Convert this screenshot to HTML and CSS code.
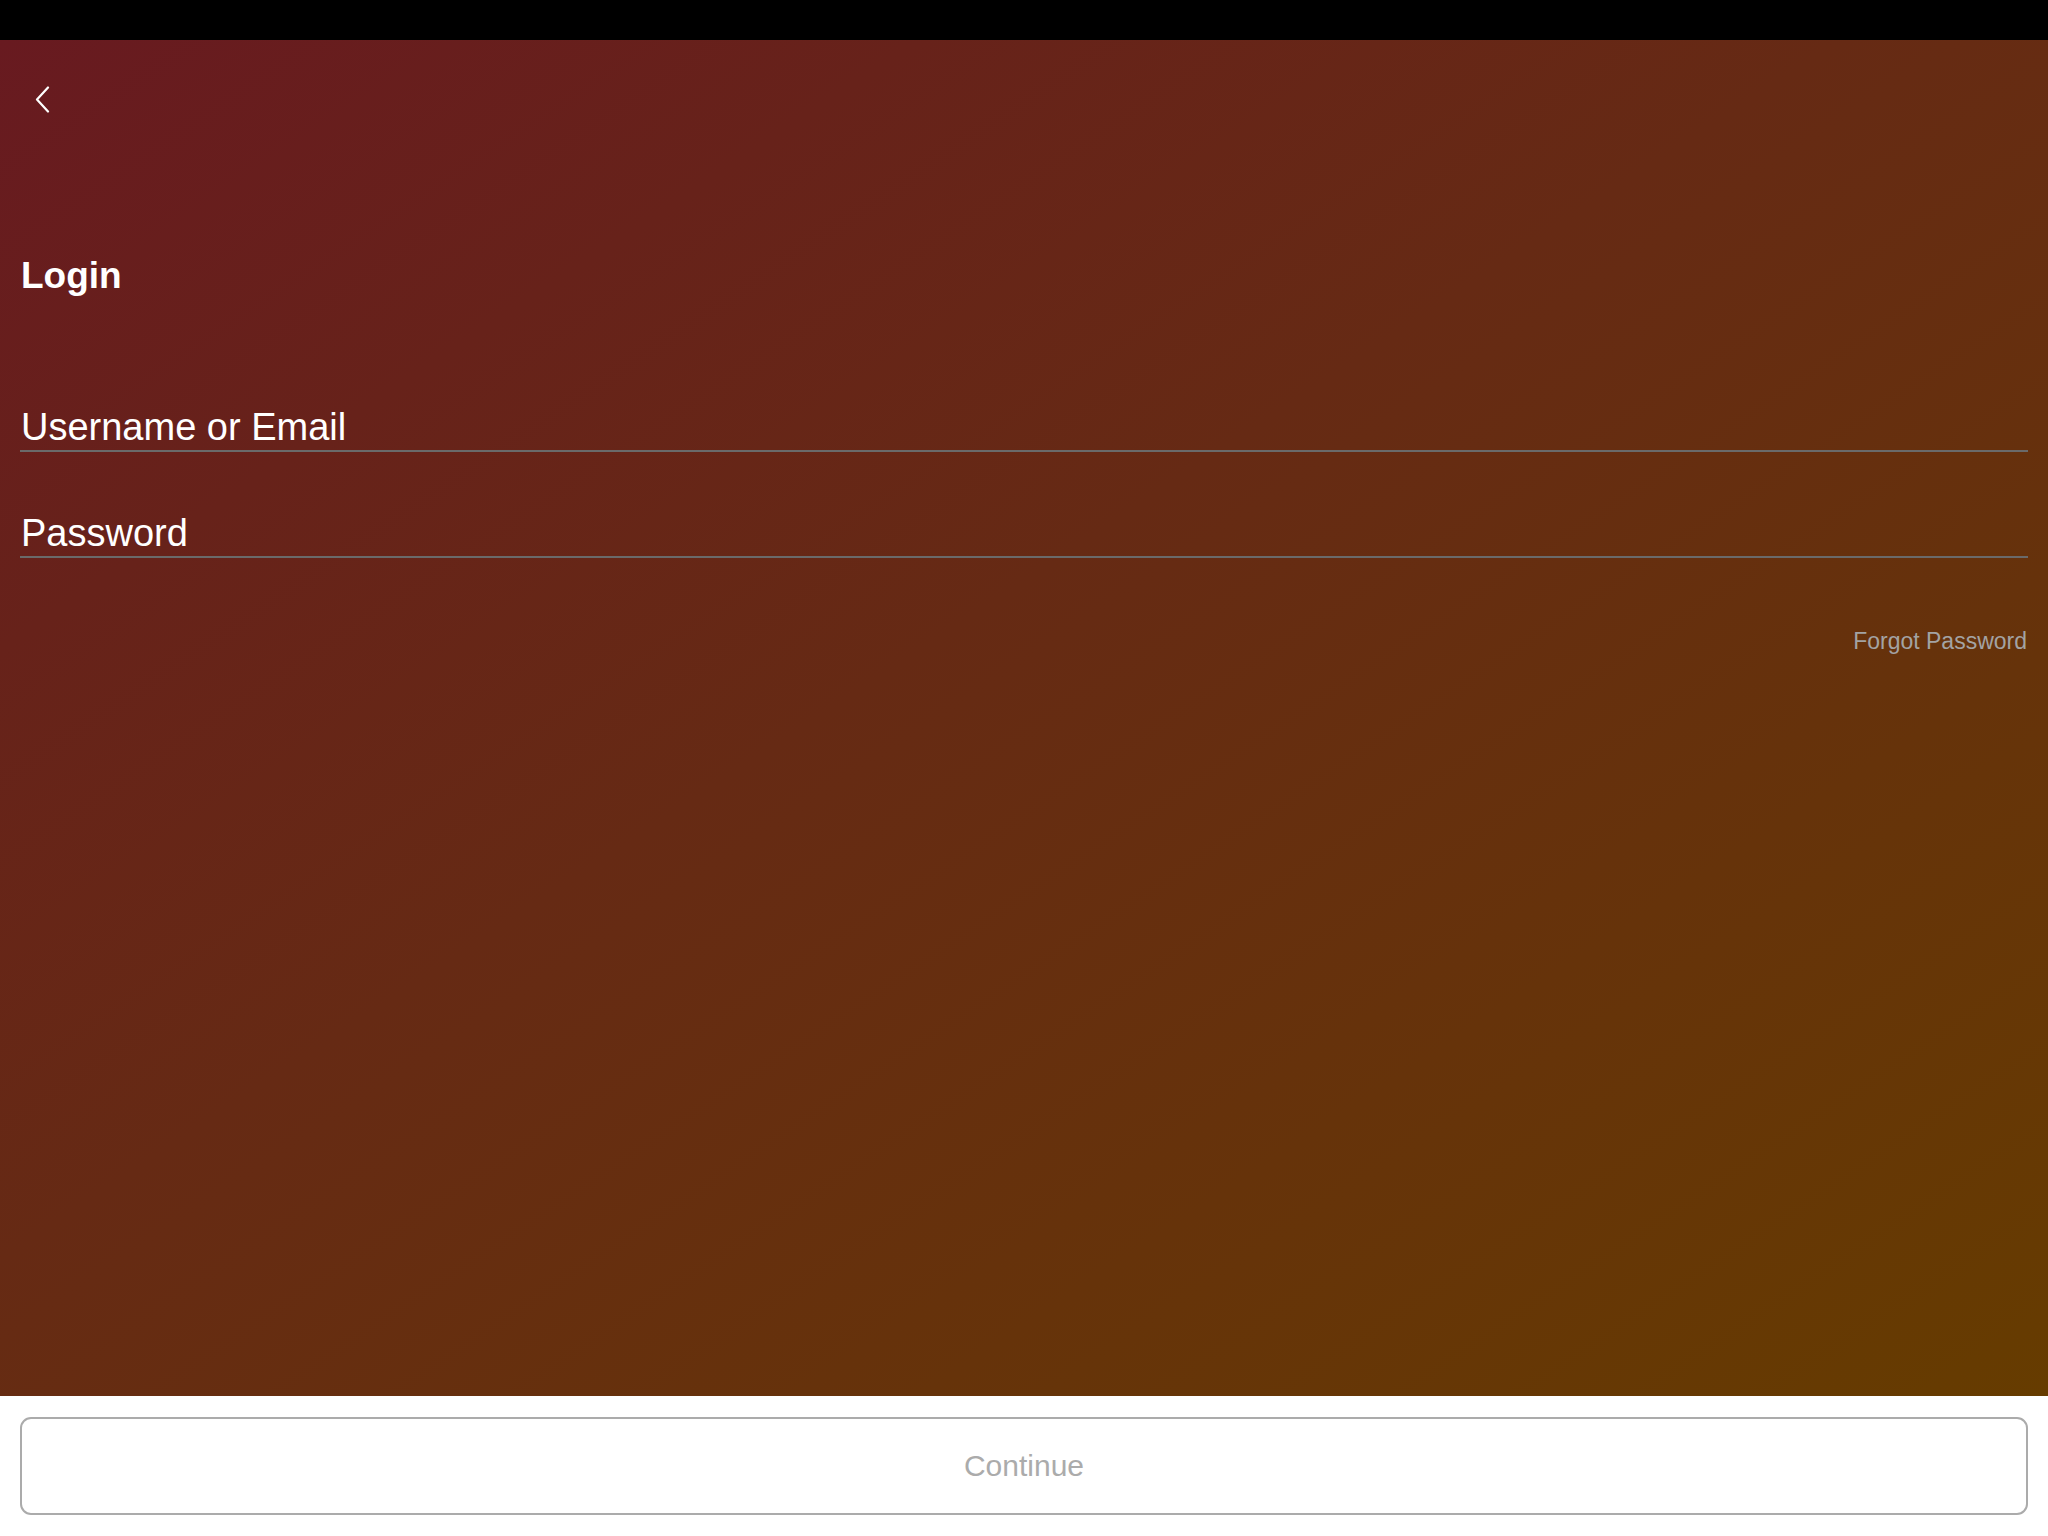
FILE: index.html
```html
<!DOCTYPE html>
<html>
<head>
<meta charset="utf-8">
<link rel="stylesheet" href="styles.css">
</head>
<body>
<div class="screen">
  <div class="statusbar"></div>
  <main class="content">
    <div class="nav">
      <svg class="back" width="16" height="28" viewBox="0 0 16 28"><polyline points="13,1.5 2,13.5 13,25.5" fill="none" stroke="#fff" stroke-width="2.2" stroke-linecap="round" stroke-linejoin="round"/></svg>
    </div>
    <h1 class="title">Login</h1>
    <div class="field"><span class="label">Username or Email</span></div>
    <div class="field"><span class="label">Password</span></div>
    <div class="forgot">Forgot Password</div>
  </main>
  <footer class="footer">
    <div class="button">Continue</div>
  </footer>
</div>
</body>
</html>
```
FILE: styles.css
```css
html, body { margin: 0; padding: 0; }
body { width: 2048px; height: 1536px; overflow: hidden; font-family: "Liberation Sans", Arial, sans-serif; }
.screen { display: flex; flex-direction: column; height: 1536px; }
.statusbar { height: 40px; background: #000; flex: none; }
.content {
  height: 1356px;
  flex: none;
  background: linear-gradient(to bottom right, #681a20 0%, #662a14 45%, #663c00 100%);
  padding: 0 20px 0 20px;
  box-sizing: border-box;
  display: flex;
  flex-direction: column;
}
.nav { height: 120px; display: flex; align-items: flex-start; padding-top: 46px; padding-left: 15px; box-sizing: border-box; }
.back { display: block; }
.title { margin: 0; color: #fff; font-size: 37px; font-weight: bold; line-height: 40px; padding-top: 96px; padding-left: 1px; height: 40px; }
.field { border-bottom: 2px solid #6a6a6a; height: 64px; box-sizing: border-box; display: flex; align-items: flex-end; }
.title + .field { margin-top: 92px; }
.field + .field { margin-top: 42px; }
.label { color: #fff; font-size: 38px; line-height: 38px; padding-bottom: 4px; padding-left: 1px; }
.forgot { align-self: flex-end; color: #a3a3a3; font-size: 23px; margin-top: 70px; padding-right: 1px; }
.footer { flex: 1; background: #fff; padding: 21px 20px 0 20px; }
.button {
  height: 98px; box-sizing: border-box;
  border: 2px solid #ababab; border-radius: 11px;
  display: flex; align-items: center; justify-content: center;
  color: #ababab; font-size: 30px;
}
```
